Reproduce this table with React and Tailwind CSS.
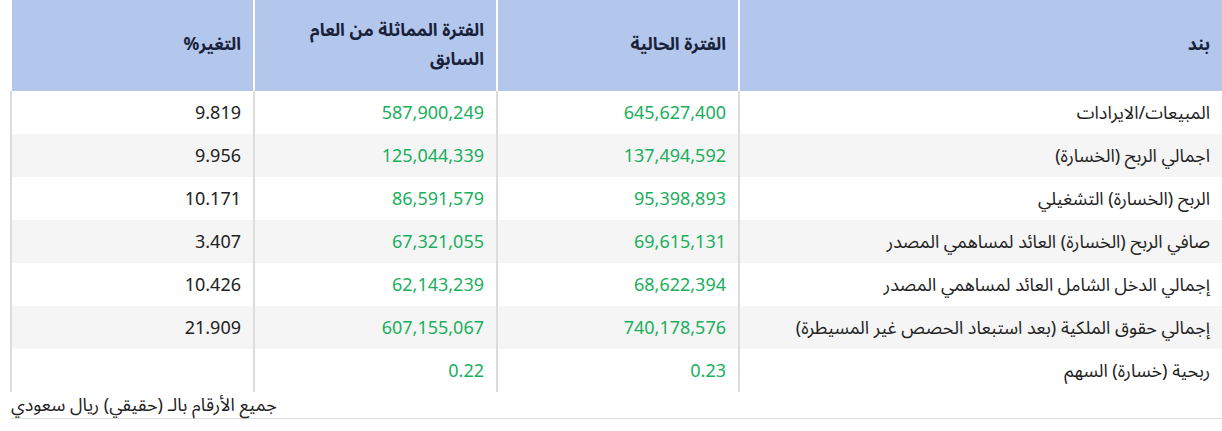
import * as React from 'react'

const rows = [
  ['المبيعات/الايرادات', '645,627,400', '587,900,249', '9.819'],
  ['اجمالي الربح (الخسارة)', '137,494,592', '125,044,339', '9.956'],
  ['الربح (الخسارة) التشغيلي', '95,398,893', '86,591,579', '10.171'],
  ['صافي الربح (الخسارة) العائد لمساهمي المصدر', '69,615,131', '67,321,055', '3.407'],
  ['إجمالي الدخل الشامل العائد لمساهمي المصدر', '68,622,394', '62,143,239', '10.426'],
  ['إجمالي حقوق الملكية (بعد استبعاد الحصص غير المسيطرة)', '740,178,576', '607,155,067', '21.909'],
  ['ربحية (خسارة) السهم', '0.23', '0.22', ''],
]

export default function App() {
  return (
    <div
      className="w-[1222px] h-[431px] bg-white pl-[10px] overflow-hidden"
      style={{ fontFamily: '"Noto Sans", "Noto Sans Arabic", "Noto Kufi Arabic", "DejaVu Sans", sans-serif' }}
    >
      <table dir="rtl" className="w-[1212px] table-fixed border-separate border-spacing-0 text-[18px]">
        <colgroup>
          <col className="w-[484px]" />
          <col className="w-[242px]" />
          <col className="w-[243px]" />
          <col className="w-[243px]" />
        </colgroup>
        <thead>
          <tr className="h-[91px] bg-[#b3c6ec] text-[#18223a] text-[17.5px]">
            <th className="border-l-2 border-white pr-3 pl-3 pb-1 text-right font-bold align-middle leading-[29px]">بند</th>
            <th className="border-l-2 border-white pr-3 pl-3 pb-1 text-right font-bold align-middle leading-[29px]">الفترة الحالية</th>
            <th className="border-l-2 border-white pr-3 pl-3 pb-1 text-right font-bold align-middle leading-[29px]">الفترة المماثلة من العام السابق</th>
            <th className="border-l-2 border-white pr-3 pl-3 pb-1 text-right font-bold align-middle leading-[29px]">التغير%</th>
          </tr>
        </thead>
        <tbody>
          {rows.map((r, i) => (
            <tr key={i} className={i % 2 === 1 ? 'h-[43px] bg-[#f5f5f5]' : 'h-[43px] bg-white'}>
              <td className="border-l-2 border-[#dcdcdc] pr-3 text-[#222] whitespace-nowrap">{r[0]}</td>
              <td className="border-l-2 border-[#dcdcdc] pr-3 text-[#1aaf5d]">{r[1]}</td>
              <td className="border-l-2 border-[#dcdcdc] pr-3 text-[#1aaf5d]">{r[2]}</td>
              <td className="border-l-2 border-[#dcdcdc] pr-3 text-[#222]">{r[3]}</td>
            </tr>
          ))}
        </tbody>
      </table>
      <div
        dir="rtl"
        className="ml-px h-[27px] border-b border-[#dddddd] text-left text-[18px] leading-[25px] text-[#222]"
      >
        جميع الأرقام بالـ (حقيقي) ريال سعودي
      </div>
    </div>
  )
}
